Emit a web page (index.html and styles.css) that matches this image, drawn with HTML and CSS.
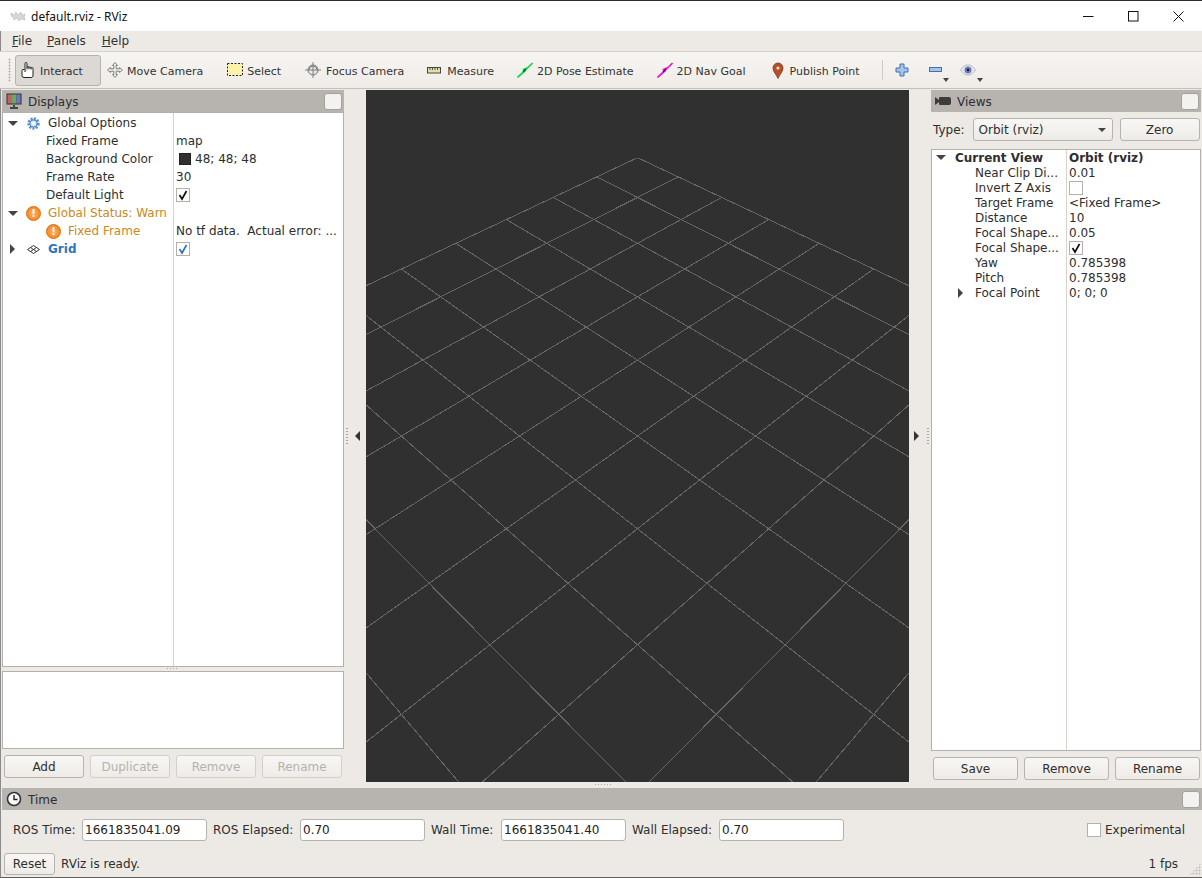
FILE: index.html
```html
<!DOCTYPE html>
<html lang="en">
<head>
    <meta charset="UTF-8">
    <title>default.rviz - RViz</title>
    <link rel="stylesheet" href="styles.css">
</head>
<body>
<div class="window">

    <!-- title bar -->
    <div class="titlebar">
        <svg class="app-icon" width="16" height="12" viewBox="0 0 16 12"><path d="M1 3l3 2 2-3 2 3 3-3 1 3 3-1-1 3 1 3-4-1-2 2-2-3-3 2-1-3-2-1z" fill="#d6d6d6" stroke="#9a9a9a" stroke-width=".7" stroke-dasharray="1 1"/></svg>
        <span class="title-text">default.rviz - RViz</span>
        <div class="win-controls">
            <svg width="11" height="11" viewBox="0 0 11 11"><path d="M0 5.5h10.5" stroke="#111" fill="none"/></svg>
            <svg width="11" height="11" viewBox="0 0 11 11"><rect x=".5" y=".5" width="9.5" height="9.5" stroke="#111" fill="none"/></svg>
            <svg width="11" height="11" viewBox="0 0 11 11"><path d="M.5.5l10 10M10.5.5l-10 10" stroke="#111" fill="none"/></svg>
        </div>
    </div>

    <!-- menu -->
    <div class="menubar">
        <span><u>F</u>ile</span>
        <span><u>P</u>anels</span>
        <span class="menu-help"><u>H</u>elp</span>
    </div>

    <!-- toolbar -->
    <div class="toolbar">
        <div class="handle"></div>
        <div class="tool tool-on">
            <svg width="18" height="18" viewBox="0 0 18 18"><path d="M5 9V2.500a1 1 0 0 1 2 0V8m0-1.500a1 1 0 0 1 2 0V8m0-1a1 1 0 0 1 2 0v1.500m0-1a1 1 0 0 1 2 0V14a2 2 0 0 1-2 2.500H4a2 2 0 0 1-2-2V10.500A1.500 1.500 0 0 1 5 9.500V11" fill="#fff" stroke="#222" stroke-width="1"/></svg>
            Interact
        </div>
        <div class="tool">
            <svg width="16" height="16" viewBox="0 0 16 16"><path d="M8 .5l2.500 3H9.200v3.300h3.300V5.500l3 2.500-3 2.500V9.200H9.200v3.300h1.300L8 15.500l-2.500-3h1.300V9.200H3.500v1.300L.5 8l3-2.500v1.300h3.300V3.500H5.500z" fill="#eee" stroke="#666" stroke-width=".8"/></svg>
            Move Camera
        </div>
        <div class="tool">
            <svg width="16" height="14" viewBox="0 0 16 14"><rect x=".5" y=".5" width="15" height="12" fill="#fdf3a8" stroke="#222" stroke-dasharray="2 1.500"/></svg>
            Select
        </div>
        <div class="tool tool-focus">
            <svg width="16" height="16" viewBox="0 0 16 16"><circle cx="8" cy="8" r="5" fill="#e4e4e4" stroke="#777"/><path d="M8 0v16M0 8h16M4 8a4 4 0 0 1 8 0" stroke="#777" fill="none" stroke-width=".9"/></svg>
            Focus Camera
        </div>
        <div class="tool tool-measure">
            <svg width="14" height="8" viewBox="0 0 14 8"><rect x=".5" y="1.500" width="13" height="5.500" fill="#e8dfa2" stroke="#444"/><path d="M3 2v2M5.500 2v2M8 2v2M10.500 2v2" stroke="#555" fill="none"/></svg>
            Measure
        </div>
        <div class="tool">
            <svg width="16" height="16" viewBox="0 0 16 16"><path d="M.5 15.500L8 9l-1.500-1.500 4.500-2zM11 5.500L15.500 1" stroke="#11d94a" stroke-width="1.600" fill="#11d94a"/><path d="M6 10l3-3" stroke="#063" stroke-width="1.600"/></svg>
            2D Pose Estimate
        </div>
        <div class="tool tool-nav">
            <svg width="16" height="16" viewBox="0 0 16 16"><path d="M.5 15.500L8 9l-1.500-1.500 4.500-2zM11 5.500L15.500 1" stroke="#f012d0" stroke-width="1.600" fill="#f012d0"/><path d="M6 10l3-3" stroke="#606" stroke-width="1.600"/></svg>
            2D Nav Goal
        </div>
        <div class="tool tool-publish">
            <svg width="12" height="17" viewBox="0 0 12 17"><path d="M6 16.500C4.500 12.500 1 10 1 6a5 5 0 0 1 10 0c0 4-3.500 6.500-5 10.500z" fill="#b5512a" stroke="#7c3a1c" stroke-width=".8"/><circle cx="6" cy="6" r="1.600" fill="#f2e2d0"/></svg>
            Publish Point
        </div>
        <div class="tool-sep"></div>
        <div class="mini mini-plus">
            <svg width="14" height="14" viewBox="0 0 14 14"><path d="M5 1h4v4h4v4H9v4H5V9H1V5h4z" fill="#a7c4e8" stroke="#3f70b0"/></svg>
        </div>
        <div class="mini mini-minus">
            <svg width="13" height="6" viewBox="0 0 13 6"><rect x=".5" y=".5" width="12" height="4" fill="#a7c4e8" stroke="#3f70b0"/></svg>
            <i class="mini-caret"></i>
        </div>
        <div class="mini mini-eye">
            <svg width="16" height="12" viewBox="0 0 16 12"><path d="M.5 6C3 2 5.500 1 8 1s5 1 7.500 5c-2.500 4-5 5-7.500 5S3 10 .5 6z" fill="#e4e7ec" stroke="#b4b9c2"/><circle cx="8" cy="6" r="3.500" fill="#6a7cbc"/><circle cx="8" cy="6" r="1.200" fill="#111"/></svg>
            <i class="mini-caret"></i>
        </div>
    </div>

    <div class="main">
        <!-- Displays panel -->
        <div class="dock left-dock">
            <div class="dock-head">
                <svg width="16" height="16" viewBox="0 0 16 16"><rect x=".5" y=".5" width="15" height="11" fill="#333"/><rect x="1.500" y="1.500" width="4.500" height="9" fill="#c9605a"/><rect x="6" y="1.500" width="4.500" height="9" fill="#6aa86a"/><rect x="10.500" y="1.500" width="4" height="9" fill="#6a78c4"/><path d="M8 12v2M4 15h8" stroke="#222" stroke-width="1.500"/></svg>
                <span>Displays</span>
                <div class="float-btn"></div>
            </div>
            <div class="tree display-tree">
                <div class="row">
                    <div class="name"><i class="arrow-down"></i>
                        <svg class="row-icon" width="15" height="15" viewBox="0 0 15 15"><circle cx="7.500" cy="7.500" r="4.800" fill="#dce8f7" stroke="#5a8fd0" stroke-width="2.800" stroke-dasharray="2 1.200"/><circle cx="7.500" cy="7.500" r="3.600" fill="none" stroke="#4f86c8"/><circle cx="7.500" cy="7.500" r="1.500" fill="#fff"/></svg>
                        <span class="label-tight">Global Options</span></div>
                    <div class="val"></div>
                </div>
                <div class="row"><div class="name child">Fixed Frame</div><div class="val">map</div></div>
                <div class="row"><div class="name child">Background Color</div><div class="val"><i class="swatch"></i>48; 48; 48</div></div>
                <div class="row"><div class="name child">Frame Rate</div><div class="val">30</div></div>
                <div class="row"><div class="name child">Default Light</div><div class="val"><i class="check"><svg width="12" height="12" viewBox="0 0 12 12"><path d="M2.500 6l2.500 4 4.500-8" stroke="#111" stroke-width="1.700" fill="none"/></svg></i></div></div>
                <div class="row warn">
                    <div class="name"><i class="arrow-down"></i>
                        <span class="warn-icon row-icon">!</span>
                        <span class="label-tight">Global Status: Warn</span></div>
                    <div class="val"></div>
                </div>
                <div class="row warn">
                    <div class="name child"><span class="warn-icon">!</span><span class="label-tight">Fixed Frame</span></div>
                    <div class="val">No tf data.&nbsp; Actual error: ...</div>
                </div>
                <div class="row">
                    <div class="name"><i class="arrow-right"></i>
                        <svg class="row-icon" width="15" height="15" viewBox="0 0 15 15"><path d="M7.500 3.500l6 4-6 4-6-4zM4.500 5.500l6 4M10.500 5.500l-6 4" fill="#fff" stroke="#333"/></svg>
                        <b class="label-tight grid-name">Grid</b></div>
                    <div class="val"><i class="check"><svg width="12" height="12" viewBox="0 0 12 12"><path d="M2.500 6l2.500 4 4.500-8" stroke="#2f74c0" stroke-width="1.700" fill="none"/></svg></i></div>
                </div>
            </div>
            <div class="split-h"></div>
            <div class="desc-box"></div>
            <div class="btn-row display-btns">
                <button class="btn">Add</button>
                <button class="btn" disabled>Duplicate</button>
                <button class="btn" disabled>Remove</button>
                <button class="btn" disabled>Rename</button>
            </div>
        </div>

        <div class="splitter">
            <div class="grip-v"></div>
            <i class="side-left"></i>
        </div>

        <!-- 3D view -->
        <div class="center">
            <div class="render">
                <svg class="grid3d" width="543" height="692" viewBox="-271.500 90 543 692">
                    <g id="gridlines" fill="none" stroke="#666" stroke-width="1" shape-rendering="crispEdges">
                        <path d="M0 157.700L590.400 436"/>
                        <path d="M-40.700 176.900L559.300 479.900"/>
                        <path d="M-84.300 197.400L524.800 528.800"/>
                        <path d="M-131.200 219.500L486.200 583.400"/>
                        <path d="M-181.700 243.300L442.800 644.800"/>
                        <path d="M-236.200 269L393.600 714.300"/>
                        <path d="M-295.200 296.800L337.400 793.900"/>
                        <path d="M-359.400 327.100L272.500 885.600"/>
                        <path d="M-429.400 360.100L196.800 992.700"/>
                        <path d="M-506.100 396.200L107.300 1119.200"/>
                        <path d="M-590.400 436L0 1271"/>
                    </g>
                    <use href="#gridlines" transform="scale(-1 1)"/>
                </svg>
            </div>
            <div class="grip-h"></div>
        </div>

        <div class="splitter">
            <i class="side-right"></i>
            <div class="grip-v"></div>
        </div>

        <!-- Views panel -->
        <div class="dock right-dock">
            <div class="dock-head">
                <svg width="16" height="16" viewBox="0 0 16 16"><path d="M0 4l4 3V5a1 1 0 0 1 1-1h9a2 2 0 0 1 2 2v4a2 2 0 0 1-2 2H5a1 1 0 0 1-1-1V9l-4 3z" fill="#3c3c3c"/></svg>
                <span>Views</span>
                <div class="float-btn"></div>
            </div>
            <div class="type-row">
                <span>Type:</span>
                <div class="combo">Orbit (rviz)<i class="combo-caret"></i></div>
                <button class="btn zero-btn">Zero</button>
            </div>
            <div class="tree view-tree">
                <div class="row"><div class="name head-name"><i class="arrow-down"></i><b>Current View</b></div><div class="val"><b>Orbit (rviz)</b></div></div>
                <div class="row"><div class="name child">Near Clip Di...</div><div class="val">0.01</div></div>
                <div class="row"><div class="name child">Invert Z Axis</div><div class="val"><i class="check"></i></div></div>
                <div class="row"><div class="name child">Target Frame</div><div class="val">&lt;Fixed Frame&gt;</div></div>
                <div class="row"><div class="name child">Distance</div><div class="val">10</div></div>
                <div class="row"><div class="name child">Focal Shape...</div><div class="val">0.05</div></div>
                <div class="row"><div class="name child">Focal Shape...</div><div class="val"><i class="check"><svg width="12" height="12" viewBox="0 0 12 12"><path d="M2.500 6l2.500 4 4.500-8" stroke="#111" stroke-width="1.700" fill="none"/></svg></i></div></div>
                <div class="row"><div class="name child">Yaw</div><div class="val">0.785398</div></div>
                <div class="row"><div class="name child">Pitch</div><div class="val">0.785398</div></div>
                <div class="row"><div class="name child-arrow"><i class="arrow-right"></i>Focal Point</div><div class="val">0; 0; 0</div></div>
            </div>
            <div class="btn-row view-btns">
                <button class="btn">Save</button>
                <button class="btn">Remove</button>
                <button class="btn">Rename</button>
            </div>
        </div>
    </div>

    <!-- Time panel -->
    <div class="time-dock">
        <div class="dock-head">
            <svg width="16" height="16" viewBox="0 0 16 16"><circle cx="8" cy="8" r="6.500" fill="#fff" stroke="#333" stroke-width="1.600"/><path d="M8 4v4.500h3.500" fill="none" stroke="#222" stroke-width="1.400"/></svg>
            <span>Time</span>
            <div class="float-btn"></div>
        </div>
        <div class="time-row">
            <span>ROS Time:</span><div class="field">1661835041.09</div>
            <span>ROS Elapsed:</span><div class="field">0.70</div>
            <span>Wall Time:</span><div class="field">1661835041.40</div>
            <span>Wall Elapsed:</span><div class="field">0.70</div>
            <div class="experimental"><i class="check"></i>Experimental</div>
        </div>
        <div class="status-row">
            <button class="btn reset-btn">Reset</button>
            <span class="status-text">RViz is ready.</span>
            <span class="fps">1 fps</span>
            <div class="size-grip"></div>
        </div>
    </div>
</div>
</body>
</html>
```

FILE: styles.css
```css
* {
    box-sizing: border-box;
}

html, body {
    margin: 0;
    padding: 0;
}

body {
    font-family: "DejaVu Sans", sans-serif;
    font-size: 12px;
    color: #2e2e2e;
    background-color: #edeae6;
    overflow: hidden;
}

i {
    display: block;
}

.window {
    width: 1202px;
    height: 878px;
    display: flex;
    flex-direction: column;
    border-top: 1px solid #2b2b2b;
    border-bottom: 1px solid #5f5f5f;
    box-shadow: inset 1px 0 0 #8a8a8a;
}

/* title bar */
.titlebar {
    height: 30px;
    flex: none;
    display: flex;
    align-items: center;
    padding-left: 10px;
    background-color: white;
}

.app-icon {
    flex: none;
    margin-right: 5px;
}

.title-text {
    font-family: "Noto Sans", sans-serif;
    font-size: 12px;
    color: #111;
}

.win-controls {
    margin-left: auto;
    display: flex;
    gap: 34px;
    padding-right: 18px;
}

/* menu */
.menubar {
    height: 20px;
    flex: none;
    display: flex;
    align-items: center;
    gap: 15px;
    padding-left: 12px;
    color: #333;
}

.menu-help {
    margin-left: 1px;
}

/* toolbar */
.toolbar {
    height: 38px;
    flex: none;
    display: flex;
    align-items: center;
    padding-left: 8px;
    background: linear-gradient(#f7f5f1, #efece8);
    border-top: 1px solid #d6d3ce;
    border-bottom: 1px solid #c4c1bc;
    font-size: 11px;
    color: #333;
}

.handle {
    width: 3px;
    height: 24px;
    margin-right: 4px;
    background-image: radial-gradient(#b8b5b0 45%, transparent 50%);
    background-size: 3px 3px;
}

.tool {
    display: flex;
    align-items: center;
    flex: none;
    height: 31px;
    gap: 4px;
    padding: 2px 6px 0;
    margin-right: 12px;
}

.tool svg {
    margin-top: -2px;
}

.tool-on {
    width: 86px;
    gap: 2px;
    padding: 2px 4px 0;
    margin-right: 0;
    background-color: #dcd9d5;
    border: 1px solid #b7b4b0;
    border-radius: 3px;
}

.tool-focus {
    gap: 5px;
    margin-right: 11px;
}

.tool-measure {
    gap: 6px;
    margin-right: 11px;
}

.tool-nav {
    gap: 3px;
    margin-right: 15px;
}

.tool-publish {
    gap: 5px;
}

.tool-sep {
    width: 1px;
    height: 20px;
    margin-left: 4px;
    background-color: #cfccc7;
}

.mini {
    position: relative;
    flex: none;
    display: flex;
    align-items: center;
    height: 20px;
}

.mini-plus {
    margin-left: 12px;
}

.mini-minus {
    margin-left: 20px;
}

.mini-eye {
    margin-left: 18px;
}

.mini-caret {
    position: absolute;
    right: -7px;
    bottom: -2px;
    border: 3.500px solid transparent;
    border-top: 4px solid #444;
    border-bottom: 0;
}

/* main area */
.main {
    height: 699px;
    flex: none;
    display: flex;
    padding-top: 1px;
    padding-left: 2px;
}

.dock {
    display: flex;
    flex-direction: column;
    flex: none;
}

.left-dock {
    width: 342px;
}

.right-dock {
    width: 270px;
}

.dock-head {
    height: 22px;
    flex: none;
    display: flex;
    align-items: center;
    gap: 6px;
    padding-left: 4px;
    background-color: #b7b3af;
    color: #2e2e2e;
}

.dock-head span {
    margin-top: 2px;
}

.float-btn {
    width: 18px;
    height: 17px;
    margin-left: auto;
    margin-right: 2px;
    background-color: #f3f2f0;
    border: 1px solid #a5a29e;
    border-radius: 3px;
}

.tree {
    background-color: white;
    border: 1px solid #b4b1ad;
    background-repeat: no-repeat;
    background-image: linear-gradient(#d6d3cf, #d6d3cf);
    background-size: 1px 100%;
}

.display-tree {
    height: 555px;
    padding-top: 1px;
    background-position: 170px 0;
}

.view-tree {
    height: 602px;
    margin-top: 8px;
    background-position: 134px 0;
}

.row {
    display: flex;
    align-items: center;
}

.display-tree .row {
    height: 18px;
}

.view-tree .row {
    height: 15px;
}

.name {
    display: flex;
    align-items: center;
    flex: none;
    white-space: nowrap;
}

.display-tree .name {
    width: 171px;
}

.view-tree .name {
    width: 135px;
}

.child {
    padding-left: 43px;
}

.display-tree .arrow-down {
    margin-left: 5px;
}

.display-tree .arrow-right {
    margin-left: 7px;
    margin-right: 3px;
}

.head-name .arrow-down {
    margin-left: 4px;
    margin-right: 9px;
}

.child-arrow .arrow-right {
    margin-left: 26px;
    margin-right: 12px;
}

.arrow-down {
    flex: none;
    width: 0;
    height: 0;
    border-left: 5px solid transparent;
    border-right: 5px solid transparent;
    border-top: 5px solid #444;
}

.arrow-right {
    flex: none;
    width: 0;
    height: 0;
    border-top: 5px solid transparent;
    border-bottom: 5px solid transparent;
    border-left: 5px solid #444;
}

.row-icon {
    flex: none;
    margin-left: 8px;
}

.label-tight {
    margin-left: 7px;
}

.val {
    padding-left: 2px;
    display: flex;
    align-items: center;
    white-space: nowrap;
}

.warn .name {
    color: #c88a1c;
}

.grid-name {
    color: #2f74c0;
}

.warn-icon {
    flex: none;
    display: flex;
    align-items: center;
    justify-content: center;
    width: 15px;
    height: 15px;
    border-radius: 50%;
    background: radial-gradient(#ffb266, #f07a10);
    border: 1px solid #d96a0c;
    color: white;
    font-weight: bold;
    font-size: 10px;
}

.swatch {
    width: 12px;
    height: 12px;
    margin-left: 3px;
    margin-right: 4px;
    background-color: #303030;
    border: 1px solid #222;
}

.check {
    flex: none;
    display: flex;
    align-items: center;
    justify-content: center;
    width: 14px;
    height: 14px;
    background-color: white;
    border: 1px solid #b4b1ad;
}

.split-h {
    height: 4px;
    flex: none;
    background-image: linear-gradient(to right, #a9a6a2 1px, transparent 1px);
    background-size: 3px 1px;
    background-repeat: repeat-x;
    background-position: 0 1px;
    background-clip: content-box;
    padding: 0 165px;
}

.desc-box {
    height: 78px;
    flex: none;
    background-color: white;
    border: 1px solid #b4b1ad;
}

.btn-row {
    display: flex;
    flex: none;
    gap: 6px;
    margin-top: 6px;
    padding-left: 2px;
}

.display-btns .btn {
    width: 80px;
}

.view-btns .btn {
    width: 85px;
}

.btn {
    height: 23px;
    padding: 0;
    font-family: "DejaVu Sans", sans-serif;
    font-size: 12px;
    color: #2e2e2e;
    background: linear-gradient(#f8f7f5, #eeebe7);
    border: 1px solid #b7b4b0;
    border-radius: 3px;
}

.btn:disabled {
    color: #b5b2ae;
    border-color: #d3d0cc;
}

.splitter {
    width: 22px;
    height: 692px;
    flex: none;
    display: flex;
    align-items: center;
    justify-content: space-between;
    padding: 0 2px;
}

.grip-v {
    width: 2px;
    height: 17px;
    background-image: linear-gradient(#a9a6a2 1px, transparent 1px);
    background-size: 2px 3px;
}

.side-left {
    width: 0;
    height: 0;
    margin-right: 4px;
    border-top: 5px solid transparent;
    border-bottom: 5px solid transparent;
    border-right: 5px solid #333;
}

.side-right {
    width: 0;
    height: 0;
    margin-left: 3px;
    border-top: 5px solid transparent;
    border-bottom: 5px solid transparent;
    border-left: 5px solid #333;
}

.center {
    width: 543px;
    flex: none;
}

.render {
    height: 692px;
    overflow: hidden;
    background-color: #303030;
}

.grid3d {
    display: block;
}

.grip-h {
    width: 16px;
    height: 1px;
    margin: 2px 0 0 229px;
    background-image: linear-gradient(to right, #a9a6a2 1px, transparent 1px);
    background-size: 3px 1px;
}

.type-row {
    display: flex;
    flex: none;
    align-items: center;
    height: 23px;
    margin-top: 6px;
    padding-left: 2px;
}

.combo {
    position: relative;
    display: flex;
    align-items: center;
    width: 140px;
    height: 23px;
    margin-left: 8px;
    padding-left: 5px;
    background: linear-gradient(#f8f7f5, #eeebe7);
    border: 1px solid #b7b4b0;
    border-radius: 3px;
}

.combo-caret {
    position: absolute;
    right: 6px;
    top: 9px;
    border: 4px solid transparent;
    border-top: 4px solid #444;
    border-bottom: 0;
}

.zero-btn {
    width: 80px;
    margin-left: 7px;
}

/* time panel */
.time-dock {
    flex: 1;
    padding-left: 2px;
}

.time-row {
    display: grid;
    grid-template-columns: 69px 131px 87px 131px 70px 131px 87px 125px 1fr;
    align-items: center;
    height: 22px;
    margin-top: 9px;
    padding-left: 11px;
}

.field {
    display: flex;
    align-items: center;
    width: 125px;
    height: 22px;
    padding-left: 2px;
    background-color: white;
    border: 1px solid #b7b4b0;
    border-radius: 3px;
    color: #222;
}

.experimental {
    display: flex;
    align-items: center;
    justify-self: end;
    gap: 4px;
    margin-right: 17px;
}

.status-row {
    position: relative;
    display: flex;
    align-items: center;
    height: 22px;
    margin-top: 12px;
    padding-left: 2px;
}

.reset-btn {
    width: 51px;
    height: 22px;
}

.status-text {
    margin-left: 6px;
}

.fps {
    margin-left: auto;
    margin-right: 24px;
}

.size-grip {
    position: absolute;
    right: 1px;
    bottom: 0;
    width: 12px;
    height: 12px;
    background-image: radial-gradient(#c4c1bc 45%, transparent 50%);
    background-size: 3px 3px;
    clip-path: polygon(100% 0, 100% 100%, 0 100%);
}
```
